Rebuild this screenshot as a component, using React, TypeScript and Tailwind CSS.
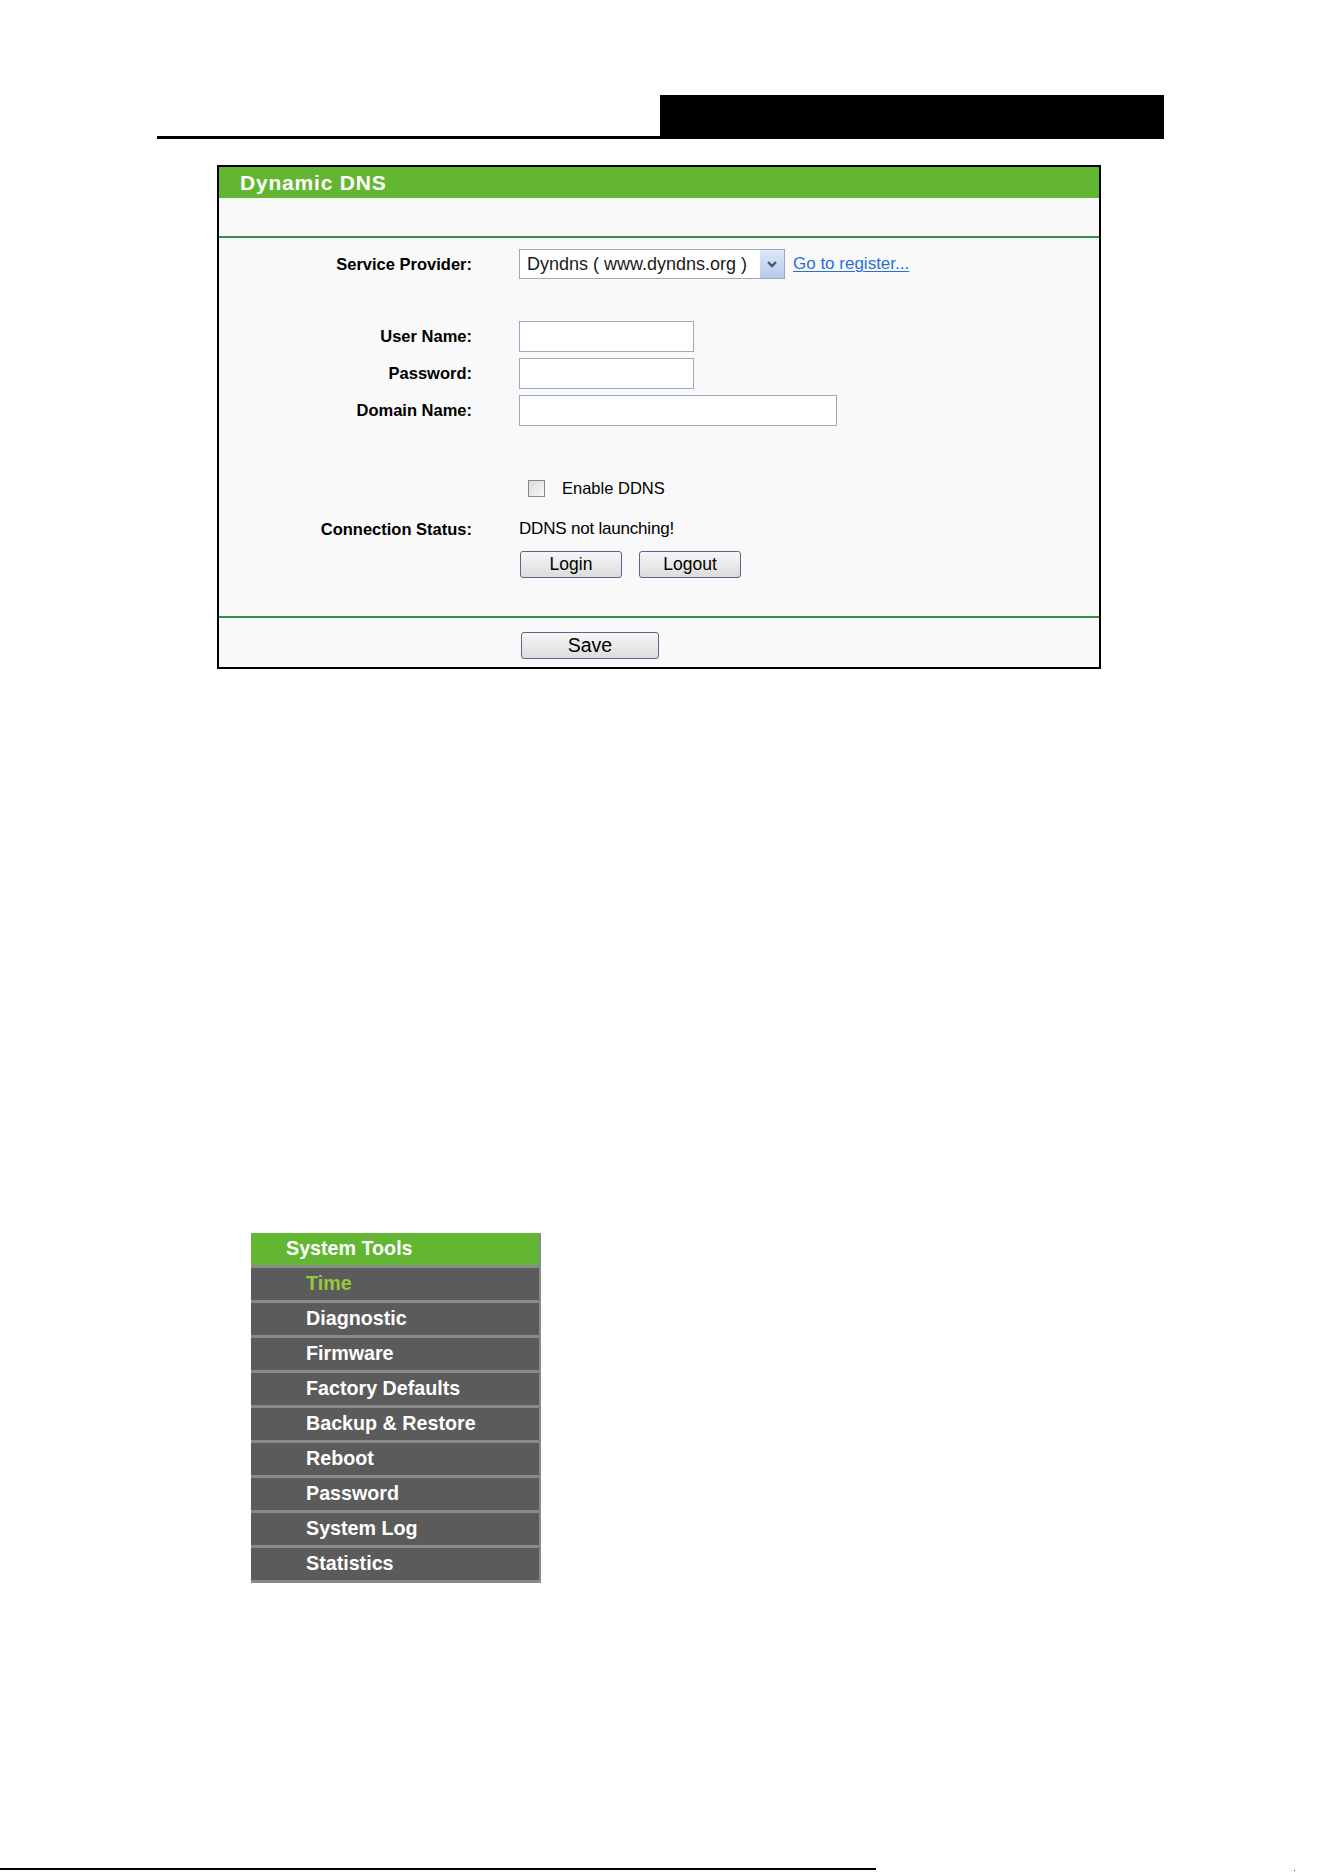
import React from "react";

const menuItems = [
  "Time",
  "Diagnostic",
  "Firmware",
  "Factory Defaults",
  "Backup & Restore",
  "Reboot",
  "Password",
  "System Log",
  "Statistics",
];

const Label = ({ children }: { children: React.ReactNode }) => (
  <span className="text-right text-[16.5px] font-bold text-black">
    {children}
  </span>
);

const TextBox = ({ width }: { width: string }) => (
  <div className={`h-[31px] ${width} border border-[#98abc1] bg-white`} />
);

const PushButton = ({
  text,
  className,
}: {
  text: string;
  className: string;
}) => (
  <button
    className={`flex items-center justify-center rounded-[3px] border border-[#52678a] bg-linear-to-b from-[#f7f7f7] to-[#dcdcdc] text-black ${className}`}
  >
    {text}
  </button>
);

const DynamicDns = () => {
  return (
    <div className="ml-[217px] mt-[26px] w-[884px] border-2 border-black bg-[#f9f9f9]">
      <div className="flex h-[31px] items-center bg-[#63b632] pl-[21px]">
        <span className="text-[21px] font-bold tracking-[0.8px] text-white">
          Dynamic DNS
        </span>
      </div>
      <div className="h-[38px]" />
      <div className="h-[2px] bg-[#35904a]" />

      <div className="grid grid-cols-[253px_1fr] gap-x-[47px] pt-[11px] pb-[38px]">
        {/* provider */}
        <div className="flex h-[30px] items-center justify-end">
          <Label>Service Provider:</Label>
        </div>
        <div className="flex h-[30px] items-center">
          <div className="flex h-[30px] w-[266px] items-stretch border border-[#98abc1] bg-white">
            <span className="flex flex-1 items-center pl-[7px] text-[18px] text-[#1a1a1a]">
              Dyndns ( www.dyndns.org )
            </span>
            <span className="flex w-[24px] items-center justify-center bg-linear-to-b from-[#dde7f8] to-[#b7c9ec]">
              <svg width="12" height="8" viewBox="0 0 12 8">
                <path
                  d="M2 2 L6 6 L10 2"
                  fill="none"
                  stroke="#44577a"
                  strokeWidth="2.4"
                />
              </svg>
            </span>
          </div>
          <a
            href="#"
            className="ml-[8px] text-[17px] text-[#2a6fd6] underline underline-offset-2"
          >
            Go to register...
          </a>
        </div>

        {/* account */}
        <div className="mt-[42px] flex h-[31px] items-center justify-end">
          <Label>User Name:</Label>
        </div>
        <div className="mt-[42px]">
          <TextBox width="w-[175px]" />
        </div>
        <div className="mt-[6px] flex h-[31px] items-center justify-end">
          <Label>Password:</Label>
        </div>
        <div className="mt-[6px]">
          <TextBox width="w-[175px]" />
        </div>
        <div className="mt-[6px] flex h-[31px] items-center justify-end">
          <Label>Domain Name:</Label>
        </div>
        <div className="mt-[6px]">
          <TextBox width="w-[318px]" />
        </div>

        {/* enable + status */}
        <div className="mt-[52px] h-[20px]" />
        <div className="mt-[52px] flex h-[20px] items-center pl-[9px]">
          <span className="h-[17px] w-[17px] border border-[#7d8894] bg-linear-to-br from-[#d9d9d9] to-[#f9f9f9]" />
          <span className="ml-[17px] text-[16.5px] text-black">Enable DDNS</span>
        </div>
        <div className="mt-[21px] flex h-[20px] items-center justify-end">
          <Label>Connection Status:</Label>
        </div>
        <div className="mt-[21px] flex h-[20px] items-center">
          <span className="text-[17px] tracking-[-0.2px] text-black">
            DDNS not launching!
          </span>
        </div>
        <div className="mt-[12px] h-[27px]" />
        <div className="mt-[12px] flex h-[27px] items-center pl-[1px]">
          <PushButton text="Login" className="h-[27px] w-[102px] text-[17.5px]" />
          <PushButton
            text="Logout"
            className="ml-[17px] h-[27px] w-[102px] text-[17.5px]"
          />
        </div>
      </div>

      <div className="h-[2px] bg-[#35904a]" />
      <div className="flex pt-[14px] pb-[8px] pl-[302px]">
        <PushButton text="Save" className="h-[27px] w-[138px] text-[19.5px]" />
      </div>
    </div>
  );
};

const SystemToolsMenu = () => {
  return (
    <div className="ml-[251px] mt-[564px] w-[290px] border-r-2 border-[#8a8a8a] bg-[#8a8a8a]">
      <div className="flex h-[32px] items-center bg-[#63b632] pl-[35px] text-[19.7px] font-bold text-white">
        System Tools
      </div>
      {menuItems.map((item, i) => (
        <div key={item} className="pt-[3px]">
          <div
            className={`flex h-[32px] items-center bg-[#5b5b5b] pl-[55px] text-[19.7px] font-bold ${
              i === 0 ? "text-[#95c93d]" : "text-white"
            }`}
          >
            {item}
          </div>
        </div>
      ))}
      <div className="h-[3px]" />
    </div>
  );
};

export default function App() {
  return (
    <div className="h-[1872px] w-[1324px] overflow-hidden bg-white font-['Liberation_Sans',Arial,sans-serif]">
      {/* page header */}
      <div className="ml-[157px] mt-[95px] flex h-[44px] w-[1007px]">
        <div className="flex-1 border-b-[3px] border-black" />
        <div className="w-[504px] bg-black" />
      </div>

      <DynamicDns />

      <SystemToolsMenu />

      {/* page footer rule */}
      <div className="mt-[285px] flex items-start">
        <div className="h-[2px] w-[876px] bg-black" />
        <div className="ml-[418px] mt-[2px] h-px w-px bg-[#4a4a00]" />
      </div>
    </div>
  );
}
